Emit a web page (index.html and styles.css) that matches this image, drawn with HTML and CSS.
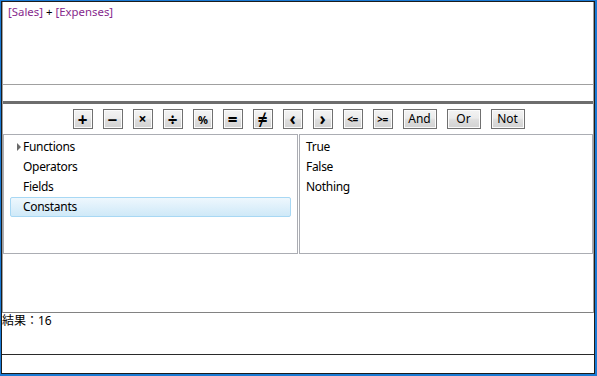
FILE: index.html
```html
<!DOCTYPE html>
<html>
<head>
<meta charset="utf-8">
<link rel="stylesheet" href="styles.css">
</head>
<body>
<div class="window">
  <div class="frame">
    <div class="editor">
      <div class="formula"><span class="field">[Sales]</span> + <span class="field">[Expenses]</span></div>
      <div class="spacer"></div>
      <div class="bar"></div>
      <div class="ops">
        <button class="btn sym big">+</button>
        <button class="btn sym big">−</button>
        <button class="btn sym small">×</button>
        <button class="btn sym big">÷</button>
        <button class="btn sym tiny">%</button>
        <button class="btn sym big">=</button>
        <button class="btn sym big">≠</button>
        <button class="btn sym chev">‹</button>
        <button class="btn sym chev">›</button>
        <button class="btn sym pair">&lt;=</button>
        <button class="btn sym pair">&gt;=</button>
        <button class="btn txt">And</button>
        <button class="btn txt">Or</button>
        <button class="btn txt">Not</button>
      </div>
      <div class="panels">
        <div class="panel tree">
          <div class="row"><span class="arrow"></span>Functions</div>
          <div class="row"><span class="noarrow"></span>Operators</div>
          <div class="row"><span class="noarrow"></span>Fields</div>
          <div class="row selected"><span class="noarrow"></span>Constants</div>
        </div>
        <div class="panel list">
          <div class="item">True</div>
          <div class="item">False</div>
          <div class="item">Nothing</div>
        </div>
      </div>
    </div>
    <div class="result">結果：16</div>
    <div class="status"></div>
  </div>
</div>
</body>
</html>
```

FILE: styles.css
```css
html, body {
  margin: 0;
  padding: 0;
  background: #ffffff;
}

body {
  font-family: "Segoe UI", "Noto Sans", "Noto Sans CJK JP", sans-serif;
  font-size: 11px;
  color: #000;
}

.window {
  width: 597px;
  height: 376px;
  box-sizing: border-box;
  border: 1px solid #1a7ad4;
  border-right-width: 2px;
  border-bottom-width: 2px;
}

.frame {
  height: 100%;
  box-sizing: border-box;
  border: 1px solid #1c1c1c;
  display: flex;
  flex-direction: column;
}

.editor {
  height: 311px;
  box-sizing: border-box;
  border-left: 1px solid #a0a0a0;
  border-right: 1px solid #a0a0a0;
  border-bottom: 1px solid #828282;
  display: flex;
  flex-direction: column;
}

.formula {
  height: 80px;
  border-bottom: 1px solid #a0a0a0;
  padding: 2px 0 0 5px;
  line-height: 16px;
  font-size: 11.4px;
}

.field {
  color: #86288c;
}

.spacer {
  height: 16px;
}

.bar {
  height: 3px;
  background: #6d6d6d;
}

.ops {
  display: flex;
  justify-content: center;
  gap: 10px;
  padding: 5px 0 5px 1px;
}

.btn {
  height: 20px;
  width: 20px;
  margin: 0;
  padding: 0;
  box-sizing: border-box;
  border: 1px solid #707070;
  background: linear-gradient(#f3f3f3 0%, #ebebeb 45%, #dddddd 55%, #d2d2d2 100%);
  box-shadow: inset 0 0 0 1px #fbfbfb;
  font-family: "Noto Sans", "DejaVu Sans", sans-serif;
  color: #000;
  display: flex;
  align-items: center;
  justify-content: center;
  line-height: 1;
}

.sym {
  font-weight: 700;
  font-size: 14px;
}

.sym.big {
  font-size: 17px;
}

.sym.small {
  font-size: 14px;
}

.sym.tiny {
  font-size: 11px;
  letter-spacing: -1px;
}

.sym.chev {
  font-size: 17px;
  padding-bottom: 2px;
}

.sym.pair {
  font-size: 10px;
  letter-spacing: -0.5px;
}

.txt {
  width: 34px;
  font-size: 12px;
  font-family: "Segoe UI", "Noto Sans", sans-serif;
  font-weight: 400;
}

.panels {
  display: flex;
  gap: 1px;
  height: 120px;
}

.panel {
  box-sizing: border-box;
  border: 1px solid #abadb3;
  padding-top: 2px;
}

.tree {
  width: 295px;
}

.list {
  flex: 1;
  padding-left: 6px;
}

.row {
  height: 20px;
  line-height: 18px;
  margin: 0 6px 0 6px;
  box-sizing: border-box;
  border: 1px solid transparent;
  border-radius: 2px;
  padding-left: 6px;
  display: flex;
  align-items: center;
  font-size: 12px;
  letter-spacing: -0.3px;
}

.row.selected {
  border-color: #a8d8f4;
  background: linear-gradient(#eef7fd, #cfe9f8);
}

.arrow {
  width: 0;
  height: 0;
  border-left: 4px solid #6a6a6a;
  border-top: 4px solid transparent;
  border-bottom: 4px solid transparent;
  margin-right: 2px;
}

.noarrow {
  width: 4px;
  margin-right: 2px;
}

.item {
  height: 20px;
  line-height: 20px;
  font-size: 12px;
  letter-spacing: -0.3px;
}

.result {
  height: 41px;
  line-height: 16px;
  border-bottom: 1px solid #2a2a2a;
  font-size: 12px;
  font-family: "Segoe UI", "Noto Sans", "Noto Sans CJK JP", sans-serif;
}

.status {
  flex: 1;
}
```
